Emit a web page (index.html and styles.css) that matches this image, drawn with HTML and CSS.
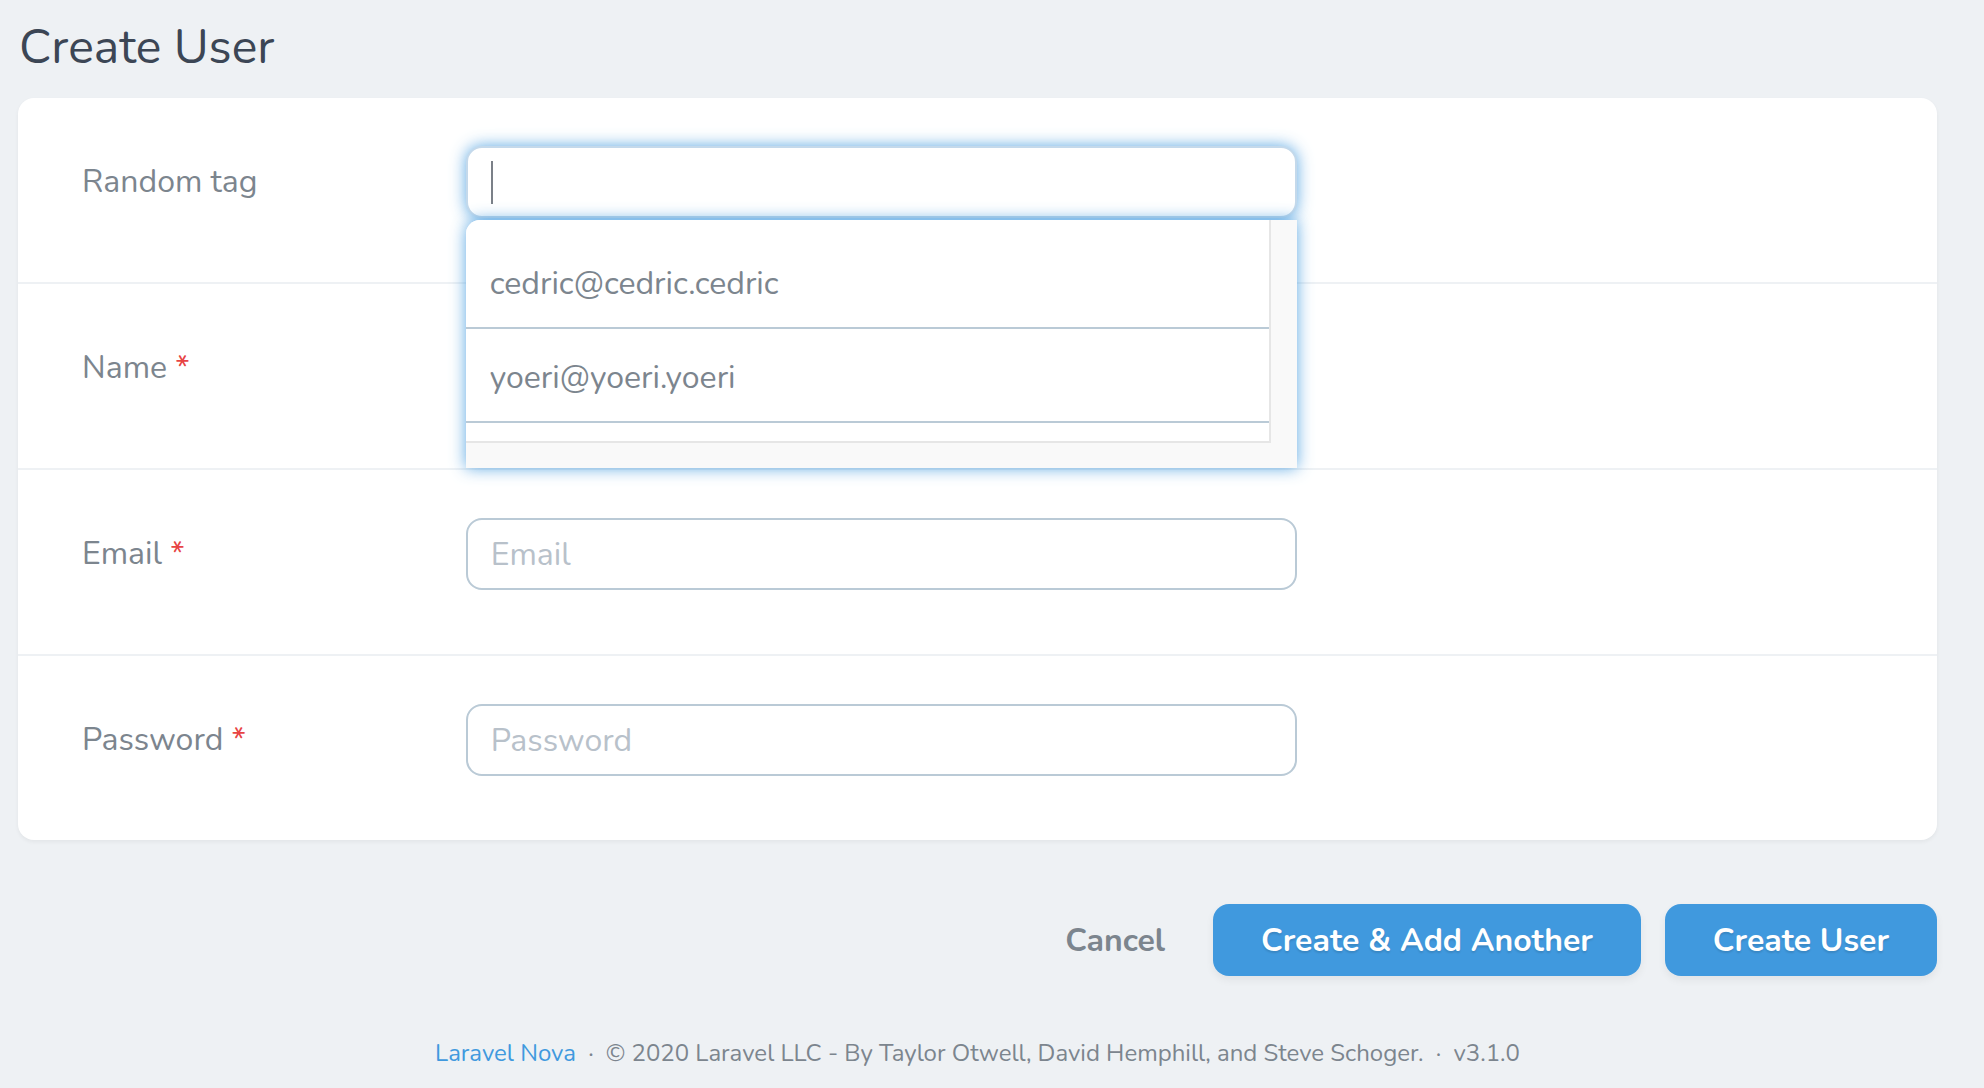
FILE: index.html
```html
<!DOCTYPE html>
<html lang="en">
<head>
    <meta charset="UTF-8">
    <meta name="viewport" content="width=device-width, initial-scale=1.0">
    <title>Create User</title>
    <link rel="stylesheet" href="styles.css">
</head>
<body>
    <div class="content">
        <h1 class="heading">Create User</h1>

        <form class="card">
            <div class="form-row">
                <div class="form-label"><label for="tag">Random tag</label></div>
                <div class="form-field">
                    <div class="search-input is-open">
                        <div class="search-box" id="tag"><span class="caret"></span></div>
                        <div class="search-dropdown">
                            <ul class="search-options">
                                <li>cedric@cedric.cedric</li>
                                <li>yoeri@yoeri.yoeri</li>
                            </ul>
                        </div>
                    </div>
                </div>
            </div>
            <div class="form-row">
                <div class="form-label"><label for="name">Name <span class="required">*</span></label></div>
                <div class="form-field">
                    <input type="text" id="name" class="form-input" placeholder="Name">
                </div>
            </div>
            <div class="form-row">
                <div class="form-label"><label for="email">Email <span class="required">*</span></label></div>
                <div class="form-field">
                    <input type="text" id="email" class="form-input" placeholder="Email">
                </div>
            </div>
            <div class="form-row">
                <div class="form-label"><label for="password">Password <span class="required">*</span></label></div>
                <div class="form-field">
                    <input type="password" id="password" class="form-input" placeholder="Password">
                </div>
            </div>
        </form>

        <div class="actions">
            <a href="#" class="btn-link">Cancel</a>
            <button type="button" class="btn">Create &amp; Add Another</button>
            <button type="button" class="btn">Create User</button>
        </div>

        <p class="footer">
            <a href="#">Laravel Nova</a>
            <span class="dot">·</span>
            © 2020 Laravel LLC - By Taylor Otwell, David Hemphill, and Steve Schoger.
            <span class="dot">·</span>
            v3.1.0
        </p>
    </div>
</body>
</html>
```

FILE: styles.css
```css
body {
    margin: 0;
    background: #eef1f4;
    font-family: 'Nunito', 'Lato', sans-serif;
    color: #7c858e;
}
.content {
    padding: 0 47px 0 18px;
}
.heading {
    margin: 17px 0 21px 1px;
    font-size: 48px;
    font-weight: 400;
    line-height: 60px;
    color: #3c4655;
}
.card {
    background: #fff;
    border-radius: 16px;
    box-shadow: 0 2px 4px rgba(0, 0, 0, 0.05);
}
.form-row {
    display: flex;
    border-bottom: 2px solid #eef1f4;
}
.form-row:last-child {
    border-bottom: none;
}
.form-label {
    width: 20%;
    box-sizing: border-box;
    padding: 48px 64px 64px;
    font-size: 32px;
    line-height: 72px;
}
.required {
    color: #e74444;
}
.form-field {
    width: 50%;
    box-sizing: border-box;
    padding: 48px 64px 64px;
}
.form-input,
.search-box {
    display: block;
    width: 100%;
    height: 72px;
    box-sizing: border-box;
    padding: 0 23px;
    border: 2px solid #bacad6;
    border-radius: 16px;
    background: #fff;
    font-family: inherit;
    font-size: 32px;
    color: #3c4655;
    outline: none;
}
.form-input::placeholder {
    color: #b8c1ca;
}
.search-input {
    position: relative;
}
.search-box {
    display: flex;
    align-items: center;
}
.search-input.is-open .search-box {
    border-color: #c4d9eb;
    box-shadow: 0 0 16px rgba(64, 153, 222, 0.85);
}
.caret {
    width: 2px;
    height: 43px;
    background: #7b8088;
}
.search-dropdown {
    position: absolute;
    top: calc(100% + 2px);
    left: 0;
    right: 0;
    z-index: 10;
    height: 248px;
    box-sizing: border-box;
    padding: 0 26px 25px 0;
    background: #f9f9f9;
    border-radius: 14px 0 0 0;
    box-shadow: 0 0 16px rgba(64, 153, 222, 0.85);
    overflow: hidden;
}
.search-options {
    height: 100%;
    box-sizing: border-box;
    list-style: none;
    margin: 0;
    padding: 15px 0 0;
    background: #fff;
    border-right: 2px solid #e6e6e6;
    border-bottom: 2px solid #e6e6e6;
    overflow: hidden;
}
.search-options li {
    padding: 6px 24px 0;
    line-height: 86px;
    border-bottom: 2px solid #bacad6;
    font-size: 32px;
    color: #7c858e;
    white-space: nowrap;
}
.actions {
    display: flex;
    justify-content: flex-end;
    align-items: center;
    margin-top: 64px;
}
.btn-link {
    margin-right: 48px;
    font-size: 32px;
    font-weight: 700;
    color: #7c858e;
    text-decoration: none;
}
.btn {
    height: 72px;
    padding: 0 48px;
    margin-left: 24px;
    border: none;
    border-radius: 16px;
    background: #4099de;
    color: #fff;
    font-family: inherit;
    font-size: 32px;
    font-weight: 700;
    text-shadow: 0 2px 2px rgba(0, 0, 0, 0.12);
    box-shadow: 0 4px 8px rgba(0, 0, 0, 0.06);
    cursor: pointer;
}
.btn-link + .btn {
    margin-left: 0;
}
.footer {
    margin: 59px 0 0;
    text-align: center;
    font-size: 24px;
    line-height: 36px;
}
.footer a {
    color: #4099de;
    text-decoration: none;
}
.dot {
    margin: 0 6px;
}
```
